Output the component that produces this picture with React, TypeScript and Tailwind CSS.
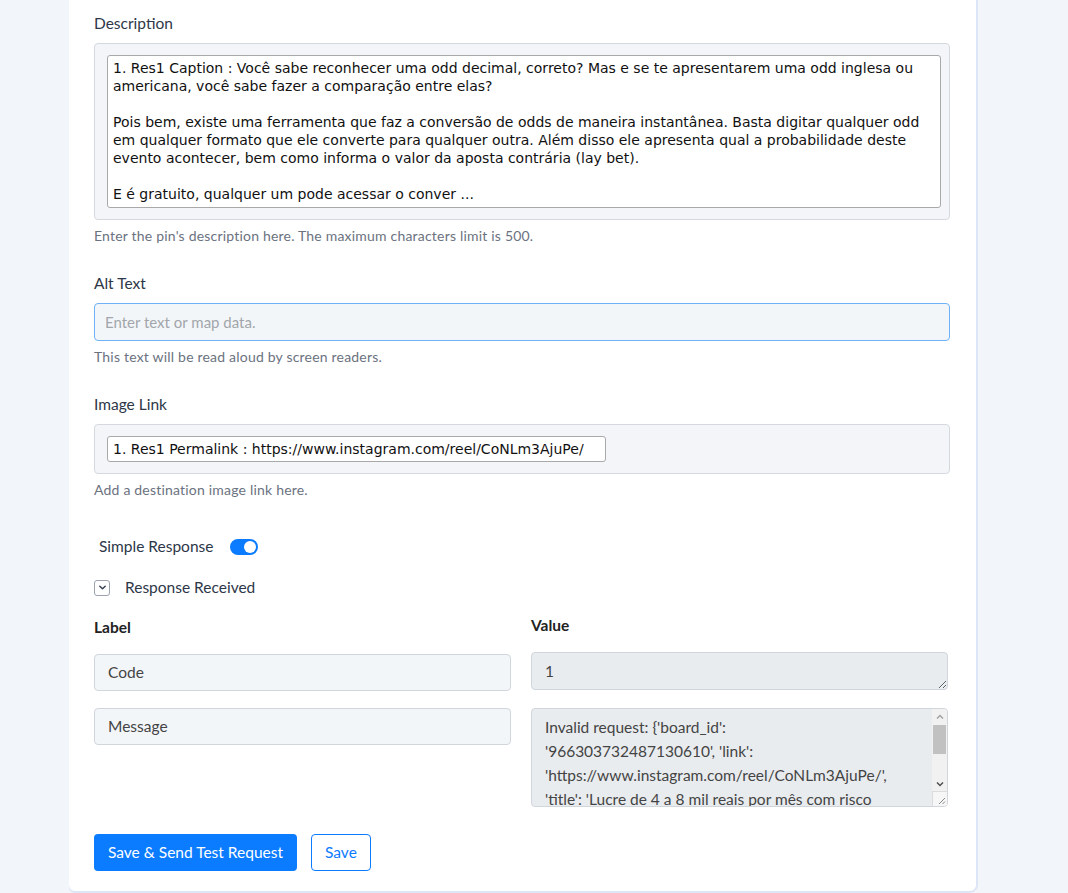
import { useState } from "react";

const CAPTION = [
  "1. Res1 Caption : Você sabe reconhecer uma odd decimal, correto? Mas e se te apresentarem uma odd inglesa ou",
  "americana, você sabe fazer a comparação entre elas?",
  "",
  "Pois bem, existe uma ferramenta que faz a conversão de odds de maneira instantânea. Basta digitar qualquer odd",
  "em qualquer formato que ele converte para qualquer outra. Além disso ele apresenta qual a probabilidade deste",
  "evento acontecer, bem como informa o valor da aposta contrária (lay bet).",
  "",
  "E é gratuito, qualquer um pode acessar o conver ...",
].join("\n");

const RESPONSE_LINES = [
  "Invalid request: {'board_id':",
  "'966303732487130610', 'link':",
  "'https://www.instagram.com/reel/CoNLm3AjuPe/',",
  "'title': 'Lucre de 4 a 8 mil reais por mês com risco",
];

const sans = "font-['Lato','Open_Sans',sans-serif]";
const mono = "font-['DejaVu_Sans',sans-serif]";

function FieldLabel({ children }: { children: React.ReactNode }) {
  return <div className="text-[15.5px] leading-5 text-[#2d3748] mb-[10px]">{children}</div>;
}

function Hint({ children }: { children: React.ReactNode }) {
  return <div className="text-[14px] tracking-[0.2px] leading-4 text-[#6b7280] mt-[8px]">{children}</div>;
}

function ResizeGrip() {
  return (
    <svg width="9" height="9" viewBox="0 0 9 9" stroke="#8a8a8a" strokeWidth="1">
      <path d="M8 2 L2 8 M8 5.5 L5.5 8" />
    </svg>
  );
}

// scrolling textarea look-alike with a classic scrollbar on the right
function ScrollBox({ lines }: { lines: string[] }) {
  return (
    <div className="mt-[17px] flex h-[99px] bg-[#e9ecef] border border-[#d1d6dd] rounded-[4px] overflow-hidden">
      <div className="flex-1 overflow-hidden pl-[13px] pt-[6px] text-[15.5px] leading-6 text-[#444] whitespace-pre">
        {lines.join("\n")}
      </div>
      <div className="w-[15px] flex flex-col bg-[#f1f1f1]">
        <div className="h-[16px] flex items-center justify-center">
          <svg width="8" height="5" viewBox="0 0 8 5" fill="none" stroke="#a3a3a3" strokeWidth="1.5">
            <path d="M1 4.5 L4 1.5 L7 4.5" />
          </svg>
        </div>
        <div className="h-[29px] mx-[1px] bg-[#c1c1c1]" />
        <div className="flex-1 flex items-end justify-center pb-[4px]">
          <svg width="8" height="5" viewBox="0 0 8 5" fill="none" stroke="#505050" strokeWidth="1.5">
            <path d="M1 0.5 L4 3.5 L7 0.5" />
          </svg>
        </div>
        <div className="h-[15px] border-t border-l border-[#dcdcdc] bg-[#f6f6f6] flex items-end justify-end pr-[1px] pb-[1px]">
          <ResizeGrip />
        </div>
      </div>
    </div>
  );
}

export default function App() {
  const [simple, setSimple] = useState(true);
  const [open, setOpen] = useState(true);

  return (
    <div className={`min-h-[893px] bg-[#f2f5f9] ${sans}`}>
      <div className="ml-[69px] w-[907px] bg-white rounded-b-md shadow-[1px_0_0_1px_#dde6f6,0_2px_0_#dde6f6] pl-[25px] pr-[26px] pt-[13px] pb-[20px]">
        {/* description */}
        <FieldLabel>Description</FieldLabel>
        <div className="w-[856px] bg-[#f3f5f8] border border-[#d5d9df] rounded-[4px] pl-3 pr-2 pt-[11px] pb-[11px]">
          <textarea
            readOnly
            wrap="off"
            value={CAPTION}
            className={`block w-full h-[153px] resize-none overflow-hidden bg-white border border-[#a9a9a9] rounded-[3px] px-[5px] pt-[3px] text-[14px] leading-[18px] text-[#111] ${mono} outline-none`}
          />
        </div>
        <Hint>Enter the pin's description here. The maximum characters limit is 500.</Hint>

        {/* alt text */}
        <div className="mt-[29px]">
          <FieldLabel>Alt Text</FieldLabel>
          <input
            placeholder="Enter text or map data."
            className="block w-[856px] h-[38px] bg-[#f3f6f9] border border-[#6fb1f7] rounded-[4px] px-[10px] text-[15px] text-[#333] placeholder:text-[#a2a6ab] outline-none"
          />
          <Hint>This text will be read aloud by screen readers.</Hint>
        </div>

        {/* image link */}
        <div className="mt-[29px]">
          <FieldLabel>Image Link</FieldLabel>
          <div className="w-[856px] bg-[#f3f5f8] border border-[#d5d9df] rounded-[4px] px-3 py-[11px]">
            <input
              readOnly
              value="1. Res1 Permalink : https://www.instagram.com/reel/CoNLm3AjuPe/"
              className={`block w-[499px] h-[26px] bg-white border border-[#a9a9a9] rounded-[3px] px-[5px] text-[14px] text-[#111] ${mono} outline-none`}
            />
          </div>
          <Hint>Add a destination image link here.</Hint>
        </div>

        {/* response toggles */}
        <div className="mt-[37px] ml-[5px] flex items-center gap-[17px]">
          <span className="text-[15.5px] text-[#2d3748]">Simple Response</span>
          <button
            onClick={() => setSimple((v) => !v)}
            className={`relative w-[28px] h-[16px] rounded-full ${simple ? "bg-[#0b7bff]" : "bg-[#cfd4da]"}`}
          >
            <span className={`absolute top-[2px] w-[12px] h-[12px] rounded-full bg-white ${simple ? "left-[14px]" : "left-[2px]"}`} />
          </button>
        </div>

        <div className="mt-[18px] flex items-center gap-[15px]">
          <button
            onClick={() => setOpen((v) => !v)}
            className="w-[16px] h-[16px] border border-[#9ca3af] rounded-[3px] flex items-center justify-center bg-white"
          >
            <svg width="9" height="9" viewBox="0 0 10 10" fill="none" stroke="#374151" strokeWidth="1.6" strokeLinecap="round" strokeLinejoin="round">
              <path d={open ? "M2 3.5 L5 6.5 L8 3.5" : "M3.5 2 L6.5 5 L3.5 8"} />
            </svg>
          </button>
          <span className="text-[15.5px] text-[#2d3748]">Response Received</span>
        </div>

        {/* label / value grid */}
        <div className="mt-[14px] grid grid-cols-2 gap-x-[20px] w-[854px]">
          <div className="text-[15.5px] font-bold text-[#222] pt-[2px]">Label</div>
          <div className="text-[15.5px] font-bold text-[#222]">Value</div>

          <input
            readOnly
            value="Code"
            className="mt-[15px] block w-full h-[37px] bg-[#f3f6f9] border border-[#d1d6dd] rounded-[4px] px-[13px] text-[15.5px] text-[#444] outline-none"
          />
          <textarea
            readOnly
            value="1"
            className="mt-[13px] block w-full h-[38px] bg-[#e9ecef] border border-[#d1d6dd] rounded-[4px] px-[13px] pt-[6px] text-[15.5px] leading-6 text-[#444] resize-y overflow-hidden outline-none"
          />

          <input
            readOnly
            value="Message"
            className="mt-[17px] block w-full h-[37px] bg-[#f3f6f9] border border-[#d1d6dd] rounded-[4px] px-[13px] text-[15.5px] text-[#444] outline-none self-start"
          />
          <ScrollBox lines={RESPONSE_LINES} />
        </div>

        {/* actions */}
        <div className="mt-[27px] flex items-center gap-[14px]">
          <button className="h-[37px] px-[14px] bg-[#0b7bff] text-white text-[15.5px] rounded-[4px]">
            Save &amp; Send Test Request
          </button>
          <button className="h-[37px] px-[13px] border border-[#0b7bff] text-[#0b7bff] text-[15.5px] rounded-[4px] bg-white">
            Save
          </button>
        </div>
      </div>
    </div>
  );
}
